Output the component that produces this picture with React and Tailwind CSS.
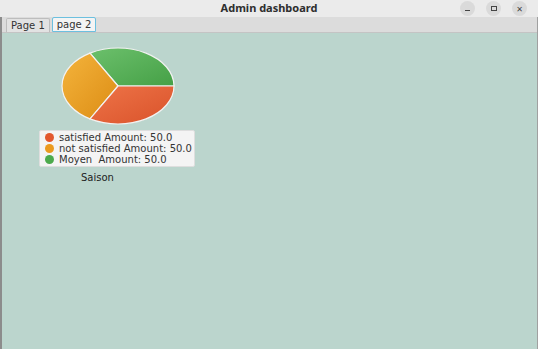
import React from 'react';

const font = { fontFamily: '"Noto Sans", "DejaVu Sans", sans-serif' };
const dejavu = { fontFamily: '"DejaVu Sans", "Noto Sans", sans-serif' };

const Pie = () => {
    const cx = 57, cy = 39, rx = 56, ry = 38;
    const pt = (deg) => {
        const a = (deg * Math.PI) / 180;
        return [cx + rx * Math.cos(a), cy - ry * Math.sin(a)];
    };
    const slice = (a0, a1) => {
        const [x0, y0] = pt(a0);
        const [x1, y1] = pt(a1);
        return `M${cx},${cy} L${x0},${y0} A${rx},${ry} 0 0 0 ${x1},${y1} Z`;
    };
    return (
        <svg width="116" height="79" viewBox="0 0 116 79" className="block">
            <defs>
                <linearGradient id="g" x1="0" y1="0" x2="1" y2="1">
                    <stop offset="0" stopColor="#6cc06c" />
                    <stop offset="1" stopColor="#45a046" />
                </linearGradient>
                <linearGradient id="o" x1="0" y1="0" x2="1" y2="1">
                    <stop offset="0" stopColor="#f4b43c" />
                    <stop offset="1" stopColor="#dc8c14" />
                </linearGradient>
                <linearGradient id="r" x1="0" y1="0" x2="1" y2="1">
                    <stop offset="0" stopColor="#ee7448" />
                    <stop offset="1" stopColor="#d9522a" />
                </linearGradient>
            </defs>
            <path d={slice(0, 120)} fill="url(#g)" stroke="#f2f2f2" strokeWidth="1.2" />
            <path d={slice(120, 240)} fill="url(#o)" stroke="#f2f2f2" strokeWidth="1.2" />
            <path d={slice(240, 360)} fill="url(#r)" stroke="#f2f2f2" strokeWidth="1.2" />
        </svg>
    );
};

const LegendRow = ({ color, label }) => (
    <div className="flex items-center gap-[5px] h-[11px]">
        <span className="w-[9px] h-[9px] rounded-full shrink-0" style={{ background: color }} />
        <span className="whitespace-pre">{label}</span>
    </div>
);

const App = () => {
    return (
        <div className="w-[538px] h-[349px] flex flex-col bg-[#bbd5cd] overflow-hidden" style={font}>
            {/* title bar */}
            <div className="h-[17px] bg-[#ebebeb] flex items-center relative">
                <div className="flex-1 text-center text-[11px] font-bold text-[#2e2e2e]">Admin dashboard</div>
                <div className="absolute right-[11px] top-[1px] flex gap-[11px]">
                    <span className="w-[15px] h-[15px] rounded-full bg-[#dadada] flex items-center justify-center">
                        <span className="w-[5px] h-px bg-[#444] mt-[3px]" />
                    </span>
                    <span className="w-[15px] h-[15px] rounded-full bg-[#dadada] flex items-center justify-center">
                        <span className="w-[6px] h-[5px] border border-[#444]" />
                    </span>
                    <span className="w-[15px] h-[15px] rounded-full bg-[#dadada] flex items-center justify-center text-[8px] text-[#444] leading-none">✕</span>
                </div>
            </div>

            <div className="flex-1 flex border-l-2 border-l-[#8c8c8c] border-r border-r-[#a0a0a0]">
                <div className="flex-1 flex flex-col">
                    {/* tab bar */}
                    <div className="h-[16px] bg-[#dcdcdc] border-b border-[#c4c4c4] flex items-end pl-[4px] gap-[2px] text-[10px] text-[#333]" style={dejavu}>
                        <div className="h-[14px] px-[4px] flex items-center bg-[#e2e2e2] border border-b-0 border-[#bdbdbd] rounded-t-[2px]">Page 1</div>
                        <div className="h-[15px] px-[4px] flex items-center bg-[#f4f4f4] border border-[#6cc0df] rounded-t-[2px]">page 2</div>
                    </div>

                    {/* content */}
                    <div className="flex-1 pt-[14px] pl-[37px]">
                        <div className="pl-[22px]">
                            <Pie />
                        </div>
                        <div className="mt-[4px] w-[156px] h-[37px] bg-[#f4f4f4] border border-[#dedede] rounded-[2px] px-[5px] text-[10px] text-[#333] leading-[11px] flex flex-col justify-center" style={dejavu}>
                            <LegendRow color="#e2582e" label="satisfied Amount: 50.0" />
                            <LegendRow color="#eb9a1e" label="not satisfied Amount: 50.0" />
                            <LegendRow color="#4caa4c" label="Moyen  Amount: 50.0" />
                        </div>
                        <div className="mt-[3px] pl-[42px] text-[10px] text-[#222]" style={dejavu}>Saison</div>
                    </div>
                </div>
            </div>
        </div>
    );
};

export default App;
